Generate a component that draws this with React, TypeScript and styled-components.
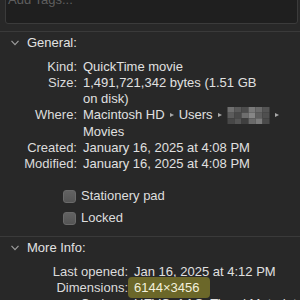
import React from 'react';
import styled, { createGlobalStyle } from 'styled-components';

const GlobalStyle = createGlobalStyle`
  html, body {
    margin: 0;
    padding: 0;
    background: #282828;
  }
  body {
    font-family: "Liberation Sans", Arial, sans-serif;
    font-size: 13px;
    color: #dedede;
  }
`;

const Panel = styled.div`
  width: 300px;
  height: 300px;
  overflow: hidden;
  background: #282828;
`;

const TagsField = styled.div`
  margin: -16px 2px 0 5px;
  height: 40px;
  box-sizing: border-box;
  padding: 7px 0 0 2px;
  background: #1f1f1f;
  border: 1px solid #3b3b3b;
  border-radius: 0 0 3px 3px;
  line-height: 16px;
  color: #5e5e5e;
`;

const Divider = styled.div<{ $top: number }>`
  margin-top: ${(p) => p.$top}px;
  height: 1px;
  background: #3a3a3a;
`;

const Section = styled.section`
  padding-top: 3px;
`;

const SectionHeader = styled.div`
  display: flex;
  align-items: center;
  height: 16px;
  line-height: 16px;
  padding-left: 11px;
  gap: 8px;
  color: #e2e2e2;
`;

const InfoGrid = styled.div<{ $labelWidth: number }>`
  display: grid;
  grid-template-columns: ${(p) => p.$labelWidth}px 1fr;
  column-gap: 6px;
  margin-top: 8px;
  line-height: 16px;
`;

const Label = styled.div`
  text-align: right;
  white-space: nowrap;
  color: #dcdcdc;
`;

const Value = styled.div`
  white-space: nowrap;
  color: #e0e0e0;
`;

const PathArrow = styled.span`
  display: inline-block;
  width: 0;
  height: 0;
  margin: 0 5px 1px 5px;
  vertical-align: middle;
  border-left: 4px solid #a8a8a8;
  border-top: 2.5px solid transparent;
  border-bottom: 2.5px solid transparent;
`;

const Mosaic = styled.svg`
  display: inline-block;
  vertical-align: -5px;
`;

const Checks = styled.div`
  display: flex;
  flex-direction: column;
  gap: 6px;
  margin-top: 16px;
  padding-left: 63px;
`;

const CheckRow = styled.label`
  display: flex;
  align-items: center;
  gap: 5px;
  height: 16px;
  line-height: 16px;
  color: #dedede;
`;

const CheckBox = styled.span`
  width: 13px;
  height: 13px;
  box-sizing: border-box;
  border-radius: 3px;
  background: linear-gradient(#626262, #555555);
  border: 0.5px solid #6a6a6a;
`;

const Highlight = styled.span`
  background: #6b6729;
  color: #f2f0dc;
  padding: 3px 11px 3px 6px;
  margin-left: -6px;
  border-radius: 4px;
`;

const Chevron = () => (
  <svg width="8" height="6" viewBox="0 0 8 6">
    <polyline points="0.5,0.8 4,4.6 7.5,0.8" fill="none" stroke="#9c9c9c" strokeWidth="1.2" />
  </svg>
);

const mosaicCells = [
  ['#6f6f6f', '#5a5a5a', '#4d4d4d', '#7a7a7a', '#6a6a6a', '#545454'],
  ['#5c5c5c', '#4a4a4a', '#6e6e6e', '#868686', '#5e5e5e', '#4f4f4f'],
  ['#474747', '#555555', '#3f3f3f', '#6a6a6a', '#7c7c7c', '#4a4a4a'],
];

const Redacted = () => (
  <Mosaic width="43" height="17" viewBox="0 0 42 17">
    {mosaicCells.map((row, r) =>
      row.map((c, i) => <rect key={`${r}-${i}`} x={i * 7} y={r * 5.67} width="7" height="5.67" fill={c} />)
    )}
  </Mosaic>
);

const App: React.FC = () => {
  return (
    <Panel>
      <GlobalStyle />
      <TagsField>Add Tags...</TagsField>
      <Divider $top={7} />
      <Section>
        <SectionHeader>
          <Chevron />
          General:
        </SectionHeader>
        <InfoGrid $labelWidth={77}>
          <Label>Kind:</Label>
          <Value>QuickTime movie</Value>
          <Label>Size:</Label>
          <Value>
            1,491,721,342 bytes (1.51 GB
            <br />
            on disk)
          </Value>
          <Label>Where:</Label>
          <Value>
            Macintosh HD
            <PathArrow />
            Users
            <PathArrow />
            <Redacted />
            <PathArrow />
            <br />
            Movies
          </Value>
          <Label>Created:</Label>
          <Value>January 16, 2025 at 4:08 PM</Value>
          <Label>Modified:</Label>
          <Value>January 16, 2025 at 4:08 PM</Value>
        </InfoGrid>
        <Checks>
          <CheckRow>
            <CheckBox />
            Stationery pad
          </CheckRow>
          <CheckRow>
            <CheckBox />
            Locked
          </CheckRow>
        </Checks>
      </Section>
      <Divider $top={10} />
      <Section>
        <SectionHeader>
          <Chevron />
          More Info:
        </SectionHeader>
        <InfoGrid $labelWidth={128}>
          <Label>Last opened:</Label>
          <Value>Jan 16, 2025 at 4:12 PM</Value>
          <Label>Dimensions:</Label>
          <Value>
            <Highlight>6144×3456</Highlight>
          </Value>
          <Label>Codecs:</Label>
          <Value>HEVC, AAC, Timed Metadata</Value>
        </InfoGrid>
      </Section>
    </Panel>
  );
};

export default App;
